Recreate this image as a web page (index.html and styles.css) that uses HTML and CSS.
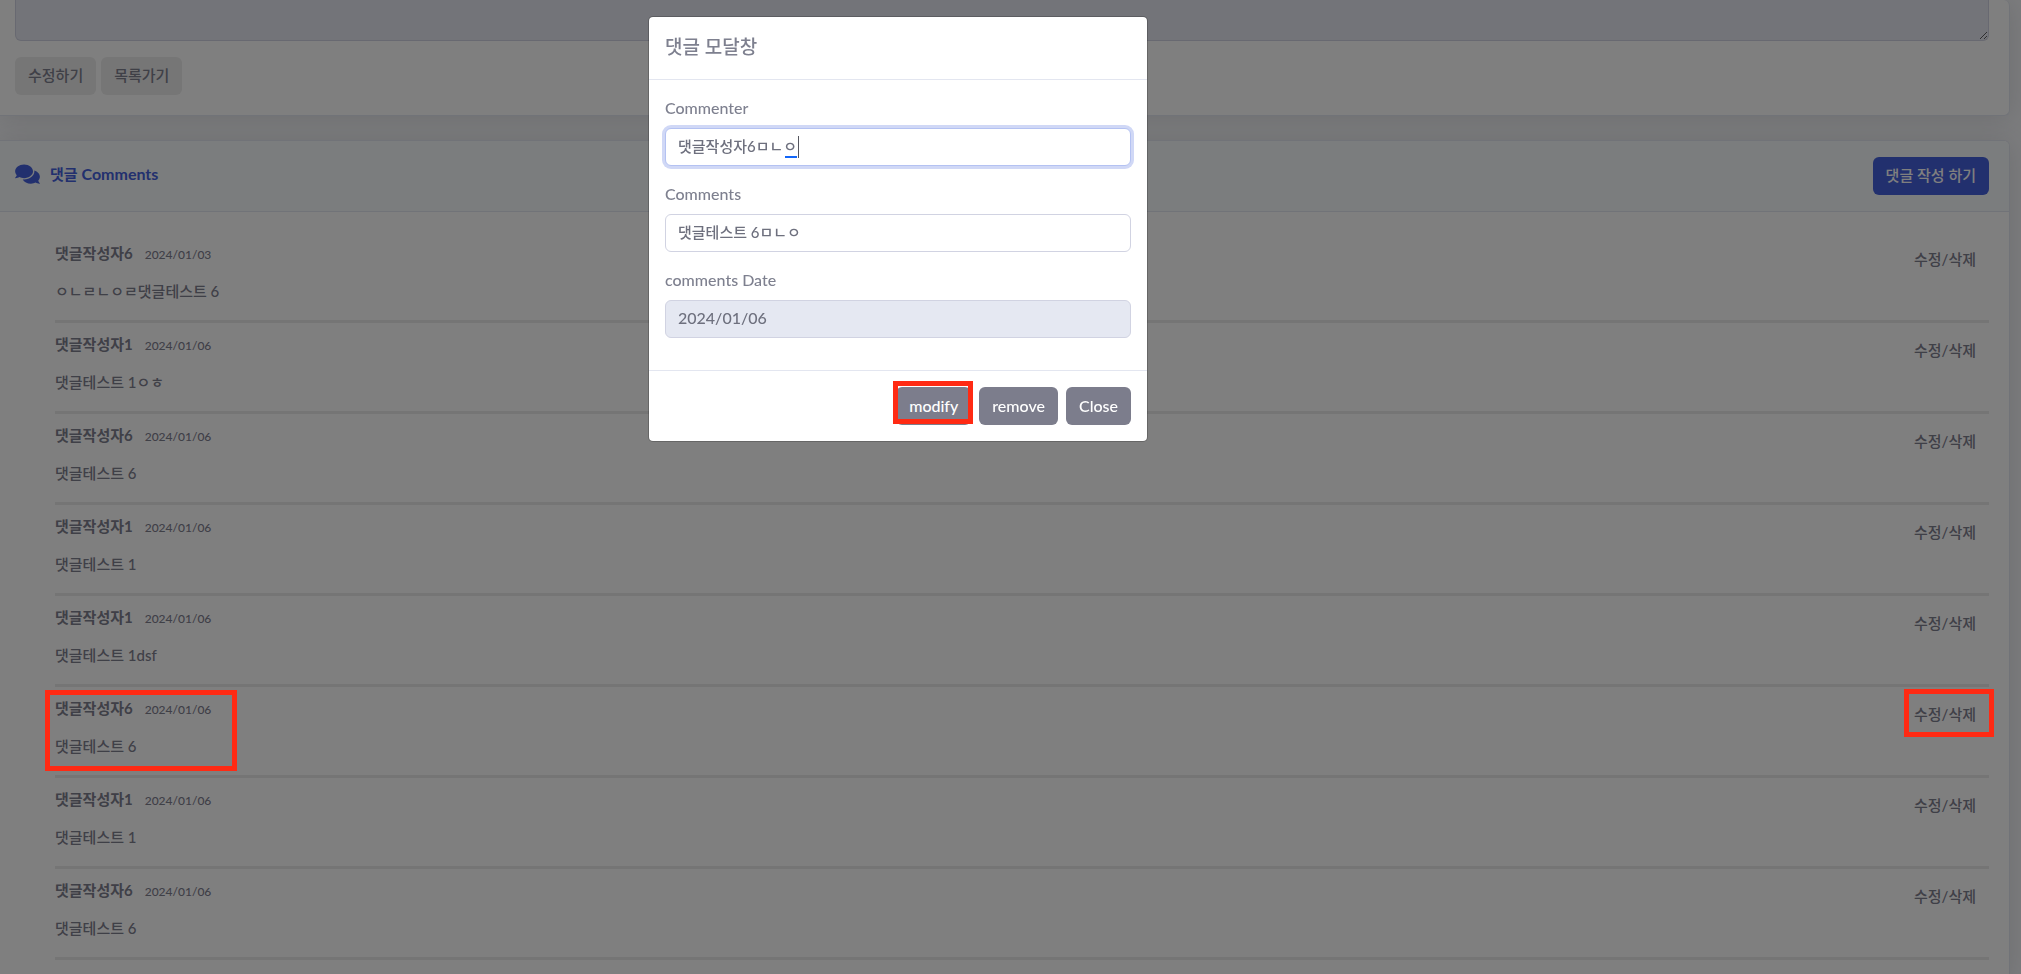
FILE: index.html
```html
<!DOCTYPE html>
<html lang="ko">
  <head>
    <meta charset="UTF-8" />
    <meta name="viewport" content="width=device-width, initial-scale=1.0" />
    <title>댓글 Comments</title>
    <link rel="stylesheet" href="styles.css">
  </head>
  <body>
    <main class="content">
      <section class="card">
        <div class="card-body post-body">
          <textarea class="post-content" aria-label="내용" readonly></textarea>
          <div class="post-actions">
            <button type="button" class="btn btn-light">수정하기</button>
            <button type="button" class="btn btn-light">목록가기</button>
          </div>
        </div>
      </section>

      <section class="card">
        <div class="card-header">
          <h2 class="card-title">
            <svg class="icon" viewBox="0 0 576 512" aria-hidden="true">
              <path fill="currentColor" d="M416 192c0-88.400-93.100-160-208-160S0 103.600 0 192c0 34.300 14.100 65.900 38 92-13.400 30.200-35.500 54.200-35.800 54.500-2.200 2.300-2.800 5.700-1.500 8.700S4.800 352 8 352c36.600 0 66.900-12.300 88.700-25 32.200 15.700 70.300 25 111.300 25 114.900 0 208-71.600 208-160zm122 220c23.900-26 38-57.700 38-92 0-66.900-53.500-124.200-129.300-148.100.9 6.600 1.300 13.300 1.300 20.100 0 105.900-107.700 192-240 192-10.800 0-21.300-.8-31.700-1.900C207.800 439.600 281.800 480 368 480c41 0 79.100-9.200 111.300-25 21.800 12.700 52.100 25 88.700 25 3.200 0 6.100-1.900 7.300-4.800 1.300-2.900.7-6.300-1.500-8.700-.3-.3-22.400-24.200-35.800-54.500z" />
            </svg>
            <span><span class="ko">댓글</span> Comments</span>
          </h2>
          <button type="button" class="btn btn-primary">댓글 작성 하기</button>
        </div>
        <div class="card-body">
          <ul class="comments">
            <li class="comment">
              <div>
                <p class="comment-head"><strong>댓글작성자6</strong><small>2024/01/03</small></p>
                <p>ㅇㄴㄹㄴㅇㄹ댓글테스트 6</p>
              </div>
              <button type="button" class="btn">수정/삭제</button>
            </li>
            <li class="comment">
              <div>
                <p class="comment-head"><strong>댓글작성자1</strong><small>2024/01/06</small></p>
                <p>댓글테스트 1ㅇㅎ</p>
              </div>
              <button type="button" class="btn">수정/삭제</button>
            </li>
            <li class="comment">
              <div>
                <p class="comment-head"><strong>댓글작성자6</strong><small>2024/01/06</small></p>
                <p>댓글테스트 6</p>
              </div>
              <button type="button" class="btn">수정/삭제</button>
            </li>
            <li class="comment">
              <div>
                <p class="comment-head"><strong>댓글작성자1</strong><small>2024/01/06</small></p>
                <p>댓글테스트 1</p>
              </div>
              <button type="button" class="btn">수정/삭제</button>
            </li>
            <li class="comment">
              <div>
                <p class="comment-head"><strong>댓글작성자1</strong><small>2024/01/06</small></p>
                <p>댓글테스트 1dsf</p>
              </div>
              <button type="button" class="btn">수정/삭제</button>
            </li>
            <li class="comment">
              <div class="mark mark-comment">
                <p class="comment-head"><strong>댓글작성자6</strong><small>2024/01/06</small></p>
                <p>댓글테스트 6</p>
              </div>
              <button type="button" class="btn mark mark-edit">수정/삭제</button>
            </li>
            <li class="comment">
              <div>
                <p class="comment-head"><strong>댓글작성자1</strong><small>2024/01/06</small></p>
                <p>댓글테스트 1</p>
              </div>
              <button type="button" class="btn">수정/삭제</button>
            </li>
            <li class="comment">
              <div>
                <p class="comment-head"><strong>댓글작성자6</strong><small>2024/01/06</small></p>
                <p>댓글테스트 6</p>
              </div>
              <button type="button" class="btn">수정/삭제</button>
            </li>
          </ul>
        </div>
      </section>
    </main>

    <div class="backdrop">
      <form class="modal" role="dialog" aria-labelledby="modalTitle">
        <div class="modal-header">
          <h5 class="modal-title" id="modalTitle">댓글 모달창</h5>
        </div>
        <div class="modal-body">
          <div class="form-group">
            <label for="commenter">Commenter</label>
            <div class="composing">
              <input type="text" class="form-control ko focused" id="commenter" value="댓글작성자6ㅁㄴㅇ" />
            </div>
          </div>
          <div class="form-group">
            <label for="comments">Comments</label>
            <input type="text" class="form-control ko" id="comments" value="댓글테스트 6ㅁㄴㅇ" />
          </div>
          <div class="form-group">
            <label for="commentsDate">comments Date</label>
            <input type="text" class="form-control" id="commentsDate" value="2024/01/06" readonly />
          </div>
        </div>
        <div class="modal-footer">
          <button type="button" class="btn btn-secondary mark mark-modify">modify</button>
          <button type="button" class="btn btn-secondary">remove</button>
          <button type="button" class="btn btn-secondary">Close</button>
        </div>
      </form>
    </div>
  </body>
</html>
```

FILE: styles.css
```css
*,
*::before,
*::after {
  box-sizing: border-box;
}
body {
  margin: 0;
  height: 100vh;
  overflow: hidden;
  background-color: #f8f9fc;
  color: #7e808f;
  font-family: Lato, "Noto Sans CJK KR", sans-serif;
  font-size: 16px;
  font-weight: 500;
  line-height: 24px;
}
h2,
h5,
p,
ul {
  margin: 0;
  padding: 0;
}
.ko {
  font-size: 15px;
}

/* cards */
.content {
  display: flex;
  flex-direction: column;
  gap: 24px;
  padding-right: 11px;
}
.card {
  background-color: #fff;
  border: 1px solid #e3e6f0;
  border-left: 0;
  border-radius: 0 6px 6px 0;
  box-shadow: 0 2px 28px rgba(58, 59, 69, 0.15);
}
.card:first-child {
  border-top: 0;
}
.card-body {
  padding: 20px 20px 20px 15px;
}
.post-body {
  padding-top: 0;
}
.post-content {
  display: block;
  width: 100%;
  height: 41px;
  background-color: #e7e9f2;
  border: 1px solid #d1d3e2;
  border-top: 0;
  border-radius: 0 0 6px 6px;
  resize: vertical;
}
.post-actions {
  display: flex;
  gap: 5px;
  margin-top: 16px;
}
.card-header {
  display: flex;
  justify-content: space-between;
  align-items: center;
  padding: 16px 20px 16px 15px;
  background-color: #f6fafc;
  border-bottom: 1px solid #e3e6f0;
  border-radius: 0 6px 0 0;
}
.card-title {
  display: flex;
  align-items: center;
  gap: 10px;
  padding-bottom: 5px;
  color: #4560dc;
  font-size: 16px;
  font-weight: 700;
}
.icon {
  width: 25px;
  height: 22px;
}

/* buttons */
.btn {
  padding: 7px 13px;
  border: 0;
  border-radius: 6px;
  background: none;
  color: #7e808f;
  font-family: inherit;
  font-size: 15px;
  font-weight: 500;
  line-height: 24px;
}
.btn-light,
.btn-primary {
  padding: 6px 13px 8px;
}
.btn-light {
  background-color: #ececec;
}
.btn-primary {
  background-color: #4560dc;
  color: #fff;
}
.btn-secondary {
  background-color: #7c7d8c;
  color: #fff;
  font-size: 16px;
}

/* comment list */
.comments {
  list-style: none;
  padding-left: 40px;
  font-size: 15px;
}
.comment {
  display: flex;
  justify-content: space-between;
  align-items: flex-start;
  padding: 8px 0 17px;
  border-bottom: 3px solid #ebebeb;
}
.comment-head {
  display: flex;
  align-items: center;
  gap: 12px;
  margin-bottom: 14px;
  padding-top: 1px;
}
.comment-head small {
  padding-top: 3px;
  font-size: 12px;
  line-height: 20px;
}

/* modal, centred on the page including the 225px sidebar */
.backdrop {
  position: fixed;
  top: 0;
  right: 0;
  bottom: 0;
  left: -225px;
  z-index: 10;
  padding-top: 16px;
  background-color: rgba(0, 0, 0, 0.5);
}
.modal {
  width: 500px;
  margin: 0 auto;
  background-color: #fff;
  background-clip: padding-box;
  border: 1px solid rgba(0, 0, 0, 0.2);
  border-radius: 5px;
}
.modal-header {
  padding: 15px 16px 17px;
  border-bottom: 1px solid #e3e6f0;
}
.modal-title {
  font-size: 19px;
  font-weight: 500;
  line-height: 30px;
}
.modal-body {
  padding: 16px;
}
.form-group {
  margin-bottom: 16px;
}
.form-group label {
  display: block;
  margin-bottom: 8px;
}
.form-control {
  display: block;
  width: 100%;
  height: 38px;
  padding: 4px 12px 7px;
  border: 1px solid #d1d3e2;
  border-radius: 6px;
  background-color: #fff;
  color: #6e707e;
  font-family: inherit;
  font-size: 16px;
  font-weight: 500;
}
.form-control.ko {
  font-size: 15px;
}
.form-control[readonly] {
  background-color: #e5e8f2;
}
.form-control.focused {
  border-color: #b4c2f2;
  box-shadow: 0 0 0 3px #d0d8f6;
}
.modal-footer {
  display: flex;
  justify-content: flex-end;
  gap: 8px;
  padding: 16px;
  border-top: 1px solid #e3e6f0;
}

/* text cursor and underline of the syllable being typed */
.composing {
  position: relative;
}
.composing::before,
.composing::after {
  content: "";
  position: absolute;
}
.composing::before {
  top: 28px;
  left: 120px;
  width: 12px;
  height: 2px;
  background-color: #1266f8;
}
.composing::after {
  top: 8px;
  left: 133px;
  width: 1px;
  height: 22px;
  background-color: #55565f;
}

/* red highlight frames */
.mark {
  position: relative;
}
.mark::after {
  content: "";
  position: absolute;
  z-index: 20;
  border: 5px solid #ff2a13;
}
.mark-comment::after {
  top: -5px;
  left: -10px;
  width: 192px;
  height: 81px;
}
.mark-edit::after {
  inset: -6px -5px -4px 3px;
}
.mark-modify::after {
  inset: -6px -2px 1px -3px;
}
```
